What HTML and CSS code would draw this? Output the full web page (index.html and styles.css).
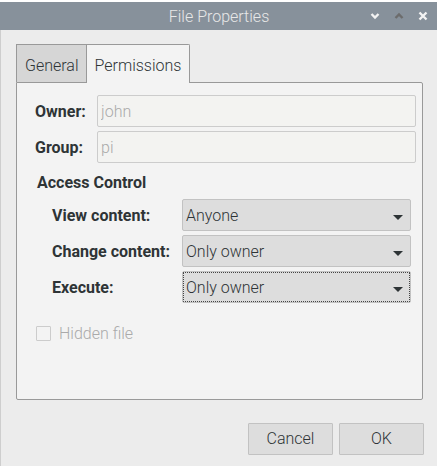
FILE: index.html
```html
<!DOCTYPE html>
<html lang="en">
<head>
<meta charset="utf-8">
<title>File Properties</title>
<link rel="stylesheet" href="styles.css">
</head>
<body>
<div class="window">
  <header class="titlebar">
    <h1 class="title">File Properties</h1>
    <div class="window-controls">
      <button class="control" type="button" aria-label="Minimize"><svg viewBox="0 0 10 10"><path d="M1.5 3L5 6.5L8.5 3"/></svg></button>
      <button class="control control-dim" type="button" aria-label="Maximize" disabled><svg viewBox="0 0 10 10"><path d="M1.5 7L5 3.5L8.5 7"/></svg></button>
      <button class="control" type="button" aria-label="Close"><svg viewBox="0 0 10 10"><path d="M1.5 1.5L8.5 8.5M8.5 1.5L1.5 8.5"/></svg></button>
    </div>
  </header>
  <form class="content">
    <div class="tabs" role="tablist">
      <button class="tab" type="button" role="tab" aria-selected="false">General</button>
      <button class="tab tab-active" type="button" role="tab" aria-selected="true">Permissions</button>
    </div>
    <section class="panel" role="tabpanel">
      <div class="identity">
        <label class="label" for="owner">Owner:</label>
        <input class="entry" id="owner" type="text" value="john" disabled>
        <label class="label" for="group">Group:</label>
        <input class="entry" id="group" type="text" value="pi" disabled>
      </div>
      <h2 class="heading">Access Control</h2>
      <div class="access">
        <label class="label" for="view">View content:</label>
        <select class="combo" id="view"><option>Anyone</option></select>
        <label class="label" for="change">Change content:</label>
        <select class="combo" id="change"><option>Only owner</option></select>
        <label class="label" for="execute">Execute:</label>
        <select class="combo combo-focused" id="execute"><option>Only owner</option></select>
      </div>
      <label class="check"><input class="checkbox" type="checkbox" disabled><span class="check-text">Hidden file</span></label>
    </section>
    <footer class="actions">
      <button class="button" type="button">Cancel</button>
      <button class="button" type="button">OK</button>
    </footer>
  </form>
</div>
</body>
</html>
```
FILE: styles.css
```css
* {
  box-sizing: border-box;
}

body {
  margin: 0;
  padding: 2px 0;
  background: #fff;
  color: #2e3436;
  font-family: Roboto, sans-serif;
  font-size: 16px;
  font-weight: 300;
  line-height: 20px;
}

button,
input,
select {
  margin: 0;
  color: inherit;
  font: inherit;
}

.window {
  background: #ececec;
}

.titlebar {
  display: grid;
  grid-template-columns: 1fr auto 1fr;
  align-items: center;
  height: 28px;
  padding-right: 7px;
  padding-left: 8px;
  background: #87919b;
}

.title {
  grid-column: 2;
  margin: 0;
  padding-top: 2px;
  color: #e8e8e8;
  font-size: 16px;
  font-weight: 300;
}

.window-controls {
  display: flex;
  justify-content: flex-end;
  gap: 10px;
}

.control {
  display: flex;
  align-items: center;
  justify-content: center;
  width: 14px;
  height: 20px;
  padding: 0;
  border: 0;
  background: none;
  color: #f3f3f3;
}

.control-dim {
  color: #6c6c6c;
}

.control svg {
  width: 10px;
  height: 10px;
  fill: none;
  stroke: currentColor;
  stroke-width: 2.4;
}

.content {
  padding: 14px 13px 11px 15px;
  border-left: 1px solid #cecece;
}

.tabs {
  display: flex;
}

.tab {
  height: 38px;
  padding: 4px 7px 0 8px;
  border: 1px solid #999;
  border-right: 0;
  border-bottom: 0;
  background: #d6d6d6;
}

.tab-active {
  position: relative;
  height: 39px;
  margin-bottom: -1px;
  padding-right: 8px;
  padding-bottom: 1px;
  border-right: 1px solid #999;
  border-top-right-radius: 2px;
  background: #f3f3f3;
}

.panel {
  margin-right: 1px;
  padding: 12px 6px 55px 18px;
  border: 1px solid #999;
  border-radius: 0 2px 2px 2px;
  background: #f3f3f3;
}

.identity,
.access {
  display: grid;
  align-items: center;
  row-gap: 4px;
}

.identity {
  grid-template-columns: 62px 1fr;
}

.access {
  grid-template-columns: 130px 1fr;
  margin: 0 5px 0 17px;
}

.label,
.heading {
  font-size: 16px;
  font-weight: 700;
}

.label {
  padding-top: 2px;
}

.heading {
  margin: 10px 2px 6px;
}

.entry {
  width: 100%;
  height: 32px;
  padding: 0 3px;
  border: 1px solid #ccc;
  border-radius: 2px;
  background: #f3f3f1;
  color: #aaa;
}

.combo {
  width: 100%;
  height: 32px;
  padding: 2px 3px 0;
  border: 1px solid #c2c2c2;
  border-radius: 2px;
  appearance: none;
  background: #ddd url("data:image/svg+xml,%3Csvg xmlns='http://www.w3.org/2000/svg' width='10' height='5'%3E%3Cpath d='M0 0h10L5 5z' fill='%232e3436'/%3E%3C/svg%3E") no-repeat right 7px top 15px;
}

.combo-focused {
  outline: 1px dotted #444;
  outline-offset: -2px;
}

.check {
  display: flex;
  align-items: center;
  gap: 8px;
  margin: 19px 1px 0;
  color: #aaa;
}

.check-text {
  padding-top: 2px;
}

.checkbox {
  width: 15px;
  height: 15px;
  border: 1px solid #ccc;
  border-radius: 1px;
  appearance: none;
}

.actions {
  display: flex;
  justify-content: flex-end;
  gap: 6px;
  margin-top: 23px;
}

.button {
  width: 85px;
  height: 32px;
  padding: 0;
  border: 1px solid #c2c2c2;
  border-radius: 1px;
  background: #ddd;
}
```
